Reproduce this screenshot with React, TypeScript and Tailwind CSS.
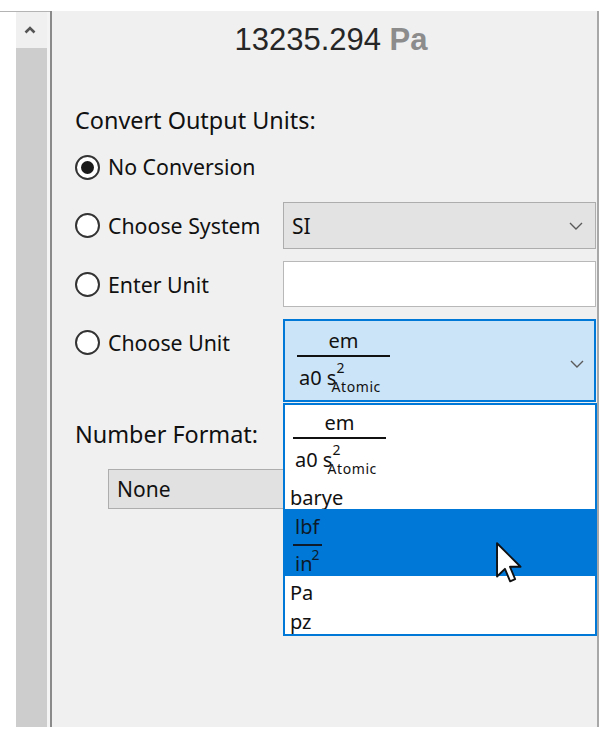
import React from "react";

function Chevron() {
  return (
    <svg width="14" height="8" viewBox="0 0 14 8">
      <polyline points="1,1 7,7 13,1" fill="none" stroke="#5a5a5a" strokeWidth="1.4" />
    </svg>
  );
}

function Radio({ checked, label }: { checked?: boolean; label: string }) {
  return (
    <div className="flex items-center h-[47px] gap-[8px]">
      <div className="w-[25px] h-[25px] rounded-full border-2 border-[#333] bg-white flex items-center justify-center">
        {checked && <div className="w-[13px] h-[13px] rounded-full bg-[#1a1a1a]" />}
      </div>
      <span className="text-[21.3px] leading-[28px]">{label}</span>
    </div>
  );
}

function EmFraction() {
  return (
    <div className="inline-flex flex-col items-stretch text-[#111]">
      <div className="text-center text-[20px] leading-[24px]">em</div>
      <div className="h-[2px] bg-[#111] mt-[2px]" />
      <div className="flex items-start pl-[2px] pr-[9px] h-[36px]">
        <span className="text-[20px] leading-[24px] mt-[9px]">a0 s</span>
        <span className="flex flex-col">
          <span className="text-[14px] leading-[14px] mt-[4px]">2</span>
          <span className="text-[14px] leading-[14px] mt-[5px] -ml-[5px] tracking-[0.6px]">Atomic</span>
        </span>
      </div>
    </div>
  );
}

function LbfFraction() {
  return (
    <div className="inline-flex flex-col items-stretch text-[#0d1b2a]">
      <div className="text-[20px] leading-[24px] px-[2px]">lbf</div>
      <div className="h-[2px] bg-[#0d1b2a] mt-[5px]" />
      <div className="flex items-start px-[2px] h-[34px]">
        <span className="text-[20px] leading-[24px] mt-[6px]">in</span>
        <span className="text-[14px] leading-[14px] mt-[2px] -ml-[1px]">2</span>
      </div>
    </div>
  );
}

export default function App() {
  return (
    <div className="relative w-[610px] h-[737px] bg-white overflow-hidden font-['Noto_Sans',sans-serif] text-[#111]">
      <div className="flex h-[727px] pt-[11px]">
        <div className="w-[16px] border-t border-[#b4b4b4]" />
        <div className="w-[31px] flex flex-col border-t border-[#b4b4b4]">
          <div className="h-[36px] bg-[#f0f0f0] flex items-center justify-center pr-[4px]">
            <svg width="12" height="8" viewBox="0 0 12 8">
              <polyline points="1.5,6.5 6,2 10.5,6.5" fill="none" stroke="#555" strokeWidth="2.6" />
            </svg>
          </div>
          <div className="flex-1 bg-[#cdcdcd]" />
        </div>
        <div className="w-[3px] border-t border-[#b4b4b4] bg-[#f4f4f4]" />
        <div className="w-[2px] bg-[#8a8a8a]" />
        <div className="w-[547px] bg-[#f0f0f0] border-r-2 border-[#a8a8a8] flex flex-col pl-[23px] pr-[1px]">
          <div className="mt-[11px] h-[36px] text-center pr-[9px] font-['Liberation_Sans',sans-serif] text-[31px] leading-[36px] text-[#262626]">
            13235.294 <span className="font-bold text-[#8c8c8c]">Pa</span>
          </div>
          <div className="mt-[48px] text-[23.4px] leading-[28px]">Convert Output Units:</div>
          <div className="mt-[10px] flex flex-col gap-[12px]">
            <div className="flex h-[46px] items-center">
              <Radio checked label="No Conversion" />
            </div>
            <div className="flex h-[47px]">
              <div className="w-[208px]">
                <Radio label="Choose System" />
              </div>
              <div className="flex-1 border border-[#adadad] bg-[#e3e3e3] flex items-center justify-between pl-[8px] pr-[12px]">
                <span className="text-[21px] leading-[28px]">SI</span>
                <Chevron />
              </div>
            </div>
            <div className="flex h-[46px]">
              <div className="w-[208px]">
                <Radio label="Enter Unit" />
              </div>
              <div className="flex-1 border border-[#b8b8b8] bg-white" />
            </div>
            <div className="flex h-[83px]">
              <div className="w-[208px]">
                <Radio label="Choose Unit" />
              </div>
              <div className="flex-1 border-2 border-[#0078d7] bg-[#cce4f7] flex items-start justify-between pl-[12px] pr-[10px] pt-[8px]">
                <EmFraction />
                <div className="mt-[31px]">
                  <Chevron />
                </div>
              </div>
            </div>
          </div>
          <div className="mt-[18px] text-[23.4px] leading-[28px]">Number Format:</div>
          <div className="mt-[21px] ml-[33px] w-[450px] h-[40px] border border-[#adadad] bg-[#e1e1e1] flex items-center pl-[8px]">
            <span className="text-[21px] leading-[28px]">None</span>
          </div>
        </div>
      </div>

      <div className="absolute left-[283px] top-[403px] w-[314px] h-[233px] border-2 border-[#0078d7] bg-white flex flex-col">
        <div className="h-[81px] pl-[8px] pt-[6px]">
          <EmFraction />
        </div>
        <div className="h-[23px] pl-[5px] flex items-center text-[20px] leading-[24px]">barye</div>
        <div className="h-[67px] bg-[#0078d7] pl-[8px] pt-[6px]">
          <LbfFraction />
        </div>
        <div className="h-[31px] pl-[5px] flex items-center text-[20px] leading-[24px] pt-[2px]">Pa</div>
        <div className="h-[27px] pl-[5px] flex items-center text-[20px] leading-[24px] pt-[2px]">pz</div>
      </div>

      <svg className="absolute left-[496px] top-[542px]" width="26" height="42" viewBox="0 0 12.5 20">
        <path d="M0.5,0.5 L0.5,16.5 L4.3,12.8 L6.8,18.8 L9.2,17.8 L6.7,11.8 L11.8,11.8 Z" fill="#fff" stroke="#111" strokeWidth="0.9" strokeLinejoin="round" />
      </svg>
    </div>
  );
}
